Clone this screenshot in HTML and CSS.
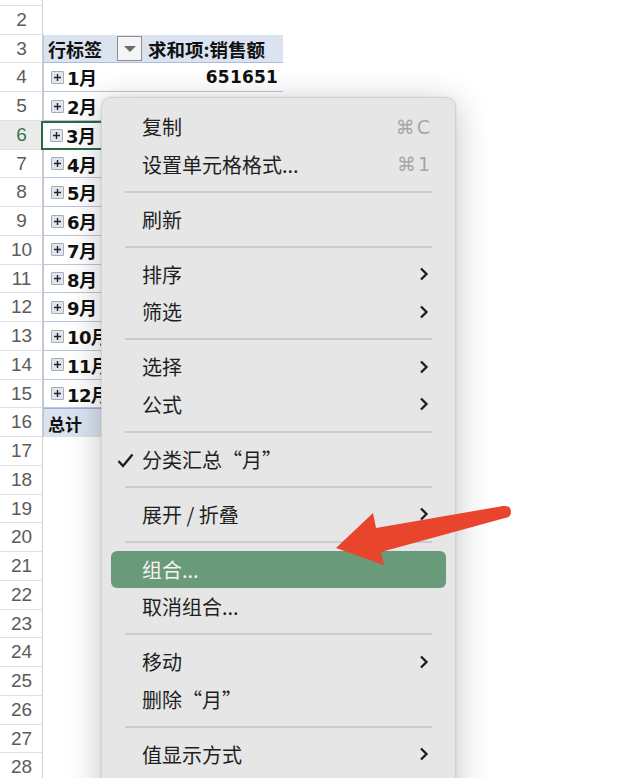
FILE: index.html
```html
<!DOCTYPE html>
<html lang="zh-CN">
<head>
<meta charset="utf-8">
<title>数据透视表</title>
<link rel="stylesheet" href="styles.css">
</head>
<body>
<div class="sheet">
  <div class="row"><div class="rn"></div><div class="ca"></div><div class="cb"></div></div>
  <div class="row"><div class="rn">2</div><div class="ca"></div><div class="cb"></div></div>
  <div class="row head"><div class="rn">3</div><div class="ca"><span class="lbl">行标签</span><span class="dd"><svg width="14" height="8" viewBox="0 0 14 8"><path d="M1 1h12L7 7z" fill="#6b6b6b"/></svg></span></div><div class="cb">求和项:销售额</div></div>
  <div class="row data first"><div class="rn">4</div><div class="ca"><span class="exp"><svg width="9" height="9" viewBox="0 0 9 9"><path d="M4.5 1v7M1 4.5h7" stroke="#222" stroke-width="1.4"/></svg></span><span class="lbl">1月</span></div><div class="cb num">651651</div></div>
  <div class="row data"><div class="rn">5</div><div class="ca"><span class="exp"><svg width="9" height="9" viewBox="0 0 9 9"><path d="M4.5 1v7M1 4.5h7" stroke="#222" stroke-width="1.4"/></svg></span><span class="lbl">2月</span></div><div class="cb"></div></div>
  <div class="row data sel"><div class="rn">6</div><div class="ca"><span class="exp"><svg width="9" height="9" viewBox="0 0 9 9"><path d="M4.5 1v7M1 4.5h7" stroke="#222" stroke-width="1.4"/></svg></span><span class="lbl">3月</span></div><div class="cb"></div></div>
  <div class="row data"><div class="rn">7</div><div class="ca"><span class="exp"><svg width="9" height="9" viewBox="0 0 9 9"><path d="M4.5 1v7M1 4.5h7" stroke="#222" stroke-width="1.4"/></svg></span><span class="lbl">4月</span></div><div class="cb"></div></div>
  <div class="row data"><div class="rn">8</div><div class="ca"><span class="exp"><svg width="9" height="9" viewBox="0 0 9 9"><path d="M4.5 1v7M1 4.5h7" stroke="#222" stroke-width="1.4"/></svg></span><span class="lbl">5月</span></div><div class="cb"></div></div>
  <div class="row data"><div class="rn">9</div><div class="ca"><span class="exp"><svg width="9" height="9" viewBox="0 0 9 9"><path d="M4.5 1v7M1 4.5h7" stroke="#222" stroke-width="1.4"/></svg></span><span class="lbl">6月</span></div><div class="cb"></div></div>
  <div class="row data"><div class="rn">10</div><div class="ca"><span class="exp"><svg width="9" height="9" viewBox="0 0 9 9"><path d="M4.5 1v7M1 4.5h7" stroke="#222" stroke-width="1.4"/></svg></span><span class="lbl">7月</span></div><div class="cb"></div></div>
  <div class="row data"><div class="rn">11</div><div class="ca"><span class="exp"><svg width="9" height="9" viewBox="0 0 9 9"><path d="M4.5 1v7M1 4.5h7" stroke="#222" stroke-width="1.4"/></svg></span><span class="lbl">8月</span></div><div class="cb"></div></div>
  <div class="row data"><div class="rn">12</div><div class="ca"><span class="exp"><svg width="9" height="9" viewBox="0 0 9 9"><path d="M4.5 1v7M1 4.5h7" stroke="#222" stroke-width="1.4"/></svg></span><span class="lbl">9月</span></div><div class="cb"></div></div>
  <div class="row data"><div class="rn">13</div><div class="ca"><span class="exp"><svg width="9" height="9" viewBox="0 0 9 9"><path d="M4.5 1v7M1 4.5h7" stroke="#222" stroke-width="1.4"/></svg></span><span class="lbl">10月</span></div><div class="cb"></div></div>
  <div class="row data"><div class="rn">14</div><div class="ca"><span class="exp"><svg width="9" height="9" viewBox="0 0 9 9"><path d="M4.5 1v7M1 4.5h7" stroke="#222" stroke-width="1.4"/></svg></span><span class="lbl">11月</span></div><div class="cb"></div></div>
  <div class="row data"><div class="rn">15</div><div class="ca"><span class="exp"><svg width="9" height="9" viewBox="0 0 9 9"><path d="M4.5 1v7M1 4.5h7" stroke="#222" stroke-width="1.4"/></svg></span><span class="lbl">12月</span></div><div class="cb"></div></div>
  <div class="row total"><div class="rn">16</div><div class="ca"><span class="lbl">总计</span></div><div class="cb"></div></div>
  <div class="row"><div class="rn">17</div><div class="ca"></div><div class="cb"></div></div>
  <div class="row"><div class="rn">18</div><div class="ca"></div><div class="cb"></div></div>
  <div class="row"><div class="rn">19</div><div class="ca"></div><div class="cb"></div></div>
  <div class="row"><div class="rn">20</div><div class="ca"></div><div class="cb"></div></div>
  <div class="row"><div class="rn">21</div><div class="ca"></div><div class="cb"></div></div>
  <div class="row"><div class="rn">22</div><div class="ca"></div><div class="cb"></div></div>
  <div class="row"><div class="rn">23</div><div class="ca"></div><div class="cb"></div></div>
  <div class="row"><div class="rn">24</div><div class="ca"></div><div class="cb"></div></div>
  <div class="row"><div class="rn">25</div><div class="ca"></div><div class="cb"></div></div>
  <div class="row"><div class="rn">26</div><div class="ca"></div><div class="cb"></div></div>
  <div class="row"><div class="rn">27</div><div class="ca"></div><div class="cb"></div></div>
  <div class="row"><div class="rn">28</div><div class="ca"></div><div class="cb"></div></div>
</div>

<div class="menu">
  <div class="item"><span class="txt">复制</span><span class="key">⌘C</span></div>
  <div class="item"><span class="txt">设置单元格格式...</span><span class="key">⌘1</span></div>
  <div class="sep"></div>
  <div class="item"><span class="txt">刷新</span></div>
  <div class="sep"></div>
  <div class="item"><span class="txt">排序</span><svg class="chev" width="10" height="14" viewBox="0 0 10 14"><path d="M2 1.5l5.5 5.5L2 12.5" fill="none" stroke="#1e1e1e" stroke-width="2.3"/></svg></div>
  <div class="item"><span class="txt">筛选</span><svg class="chev" width="10" height="14" viewBox="0 0 10 14"><path d="M2 1.5l5.5 5.5L2 12.5" fill="none" stroke="#1e1e1e" stroke-width="2.3"/></svg></div>
  <div class="sep"></div>
  <div class="item"><span class="txt">选择</span><svg class="chev" width="10" height="14" viewBox="0 0 10 14"><path d="M2 1.5l5.5 5.5L2 12.5" fill="none" stroke="#1e1e1e" stroke-width="2.3"/></svg></div>
  <div class="item"><span class="txt">公式</span><svg class="chev" width="10" height="14" viewBox="0 0 10 14"><path d="M2 1.5l5.5 5.5L2 12.5" fill="none" stroke="#1e1e1e" stroke-width="2.3"/></svg></div>
  <div class="sep"></div>
  <div class="item checked"><svg class="check" width="17" height="15" viewBox="0 0 17 15"><path d="M1.5 8l4.5 5L15.5 1.5" fill="none" stroke="#1e1e1e" stroke-width="2.4"/></svg><span class="txt">分类汇总“月”</span></div>
  <div class="sep"></div>
  <div class="item"><span class="txt">展开 / 折叠</span><svg class="chev" width="10" height="14" viewBox="0 0 10 14"><path d="M2 1.5l5.5 5.5L2 12.5" fill="none" stroke="#1e1e1e" stroke-width="2.3"/></svg></div>
  <div class="sep"></div>
  <div class="item active"><span class="txt">组合...</span></div>
  <div class="item"><span class="txt">取消组合...</span></div>
  <div class="sep"></div>
  <div class="item"><span class="txt">移动</span><svg class="chev" width="10" height="14" viewBox="0 0 10 14"><path d="M2 1.5l5.5 5.5L2 12.5" fill="none" stroke="#1e1e1e" stroke-width="2.3"/></svg></div>
  <div class="item"><span class="txt">删除“月”</span></div>
  <div class="sep"></div>
  <div class="item"><span class="txt">值显示方式</span><svg class="chev" width="10" height="14" viewBox="0 0 10 14"><path d="M2 1.5l5.5 5.5L2 12.5" fill="none" stroke="#1e1e1e" stroke-width="2.3"/></svg></div>
</div>

<svg class="arrow" width="640" height="778" viewBox="0 0 640 778">
  <path d="M336 548 L373 513 L376 528 L503 506 Q511 505 511 512 Q511 517 505 518 L381 552 L384 565 Z" fill="#e8452c"/>
</svg>
</body>
</html>
```

FILE: styles.css
```css
html, body {
  margin: 0;
  padding: 0;
  background: #ffffff;
  overflow: hidden;
  width: 640px;
  height: 778px;
}

body {
  position: relative;
  font-family: "Noto Sans CJK SC", "Noto Sans", sans-serif;
}

.sheet {
  margin-top: -22.85px;
  display: flex;
  flex-direction: column;
}

.row {
  display: grid;
  grid-template-columns: 43px 102px 138px 1fr;
  height: 28.75px;
}

.rn {
  box-sizing: border-box;
  border-right: 1px solid #cfcfcf;
  border-bottom: 1px solid #e1e1e1;
  font-family: "Liberation Sans", Arial, sans-serif;
  font-size: 19px;
  color: #5b5b5b;
  display: flex;
  align-items: center;
  justify-content: center;
  padding-left: 1px;
}

.ca, .cb {
  box-sizing: border-box;
  display: flex;
  align-items: center;
  font-weight: 700;
  color: #111;
  white-space: nowrap;
  overflow: hidden;
}

.ca {
  padding-left: 4px;
}

.head .ca, .head .cb {
  background: #dbe3f1;
  border-bottom: 1px solid #aebcd6;
  font-size: 18px;
}

.head .ca {
  border-left: 1px solid #b9c5dc;
  justify-content: space-between;
  padding-right: 1px;
}

.head .cb {
  padding-left: 3px;
  font-size: 18.5px;
}

.dd {
  width: 25px;
  height: 25px;
  box-sizing: border-box;
  border: 1px solid #8f8f8f;
  background: #f4f4f4;
  display: flex;
  align-items: center;
  justify-content: center;
  margin-right: 2px;
}

.data .ca {
  border-left: 1px solid #b9c5dc;
  border-bottom: 1px solid #b9c5dc;
  font-size: 18px;
}

.data .cb {
  border-bottom: 1px solid #b9c5dc;
}

.data:not(.first) .cb {
  border-bottom-color: transparent;
}

.num {
  justify-content: flex-end;
  padding-right: 5px;
  font-family: "DejaVu Sans", sans-serif;
  font-size: 17px;
  letter-spacing: 0.2px;
}

.exp {
  width: 13px;
  height: 13px;
  box-sizing: border-box;
  border: 1px solid #a4adbd;
  border-radius: 1px;
  background: #e1e5ee;
  display: flex;
  align-items: center;
  justify-content: center;
  margin: 0 3px 0 3px;
  flex: none;
}

.lbl {
  font-family: "DejaVu Sans", "Noto Sans CJK SC", sans-serif;
}

.data .lbl {
  letter-spacing: -0.6px;
}

.sel .rn {
  background: #ebebeb;
  color: #2f7a4c;
}

.sel .ca {
  border: 2px solid #2b6b43;
  margin-left: -2px;
  padding-left: 4px;
}

.total .ca, .total .cb {
  background: #dbe3f1;
  border-top: 1px solid #9fb1d0;
  font-size: 17px;
}

.total .ca {
  border-left: 1px solid #b9c5dc;
}

/* context menu */
.menu {
  position: absolute;
  left: 101px;
  top: 97px;
  width: 355px;
  height: 720px;
  box-sizing: border-box;
  padding-top: 10px;
  background: #e6e6e6;
  border: 1px solid #d2d2d2;
  border-radius: 10px;
  box-shadow: 0 6px 34px rgba(0, 0, 0, 0.24), 0 0 3px rgba(0, 0, 0, 0.08);
  display: flex;
  flex-direction: column;
}

.item {
  height: 37.5px;
  flex: none;
  display: flex;
  align-items: center;
  padding: 0 25px 0 40px;
  position: relative;
  font-size: 20px;
  color: #1f1f1f;
}

.txt {
  flex: 1;
  white-space: nowrap;
}

.key {
  font-family: "DejaVu Sans", "Liberation Sans", sans-serif;
  font-size: 19px;
  color: #a6a6a6;
  letter-spacing: 2px;
  margin-right: -2px;
}

.chev {
  flex: none;
  margin-right: 1px;
}

.check {
  position: absolute;
  left: 15px;
  top: 12px;
}

.sep {
  height: 17.5px;
  flex: none;
  margin: 0 23px 0 23px;
  display: flex;
  align-items: center;
}

.sep::before {
  content: "";
  display: block;
  width: 100%;
  height: 2px;
  background: #cbcbcb;
}

.item.active {
  margin: 0 9px 0 9px;
  padding-left: 31px;
  background: #699a79;
  border-radius: 6px;
  color: #f4f4f4;
}

.arrow {
  position: absolute;
  left: 0;
  top: 0;
  pointer-events: none;
}
```
